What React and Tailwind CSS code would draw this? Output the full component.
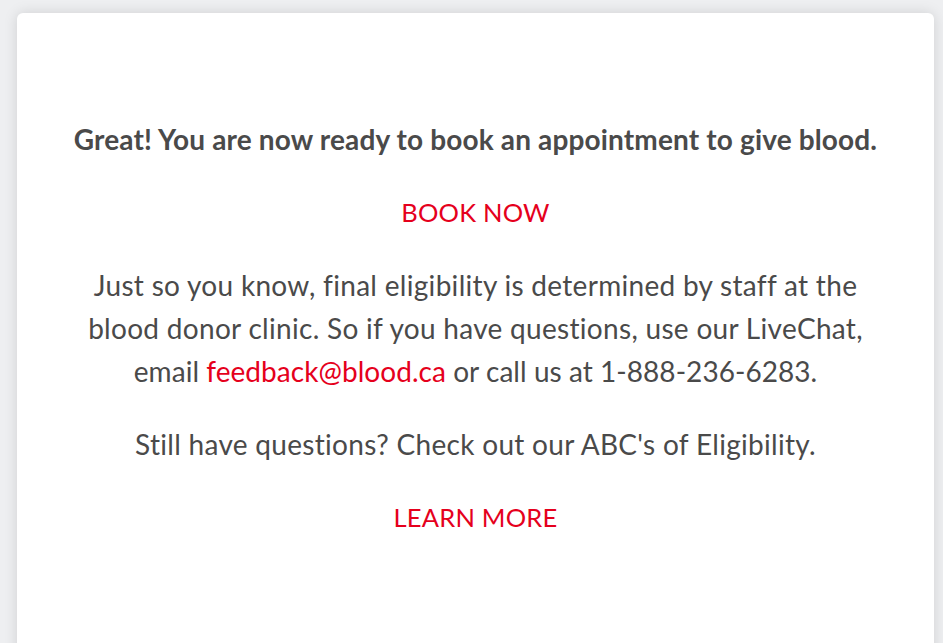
export default function App() {
  return (
    <div className="h-screen overflow-hidden bg-[#eeeff1] pl-[17px] pr-[9px] pt-[13px]">
      <div
        className="h-[700px] rounded-[6px] bg-white pt-[105px] text-center text-[#4a4a4a] shadow-[0_0_14px_rgba(0,0,0,0.13)]"
        style={{ fontFamily: 'Lato, "Open Sans", sans-serif' }}
      >
        <h2 className="text-[28px] font-bold leading-[43px] tracking-[0.15px]">
          Great! You are now ready to book an appointment to give blood.
        </h2>
        <a href="#" className="mt-[30px] block text-[25.5px] leading-[43px] tracking-[0.2px] text-[#e5001c]">
          BOOK NOW
        </a>
        <p className="mt-[30px] text-[28px] leading-[43px] tracking-[0.3px]">
          Just so you know, final eligibility is determined by staff at the
          <br />
          blood donor clinic. So if you have questions, use our LiveChat,
          <br />
          <span className="tracking-[0.05px]">
            email <a href="#" className="text-[#e5001c]">feedback@blood.ca</a> or call us at 1-888-236-6283.
          </span>
        </p>
        <p className="mt-[30px] text-[28px] leading-[43px] tracking-[0.3px]">
          Still have questions? Check out our ABC's of Eligibility.
        </p>
        <a href="#" className="mt-[30px] block text-[25.5px] leading-[43px] tracking-[0.2px] text-[#e5001c]">
          LEARN MORE
        </a>
      </div>
    </div>
  )
}
